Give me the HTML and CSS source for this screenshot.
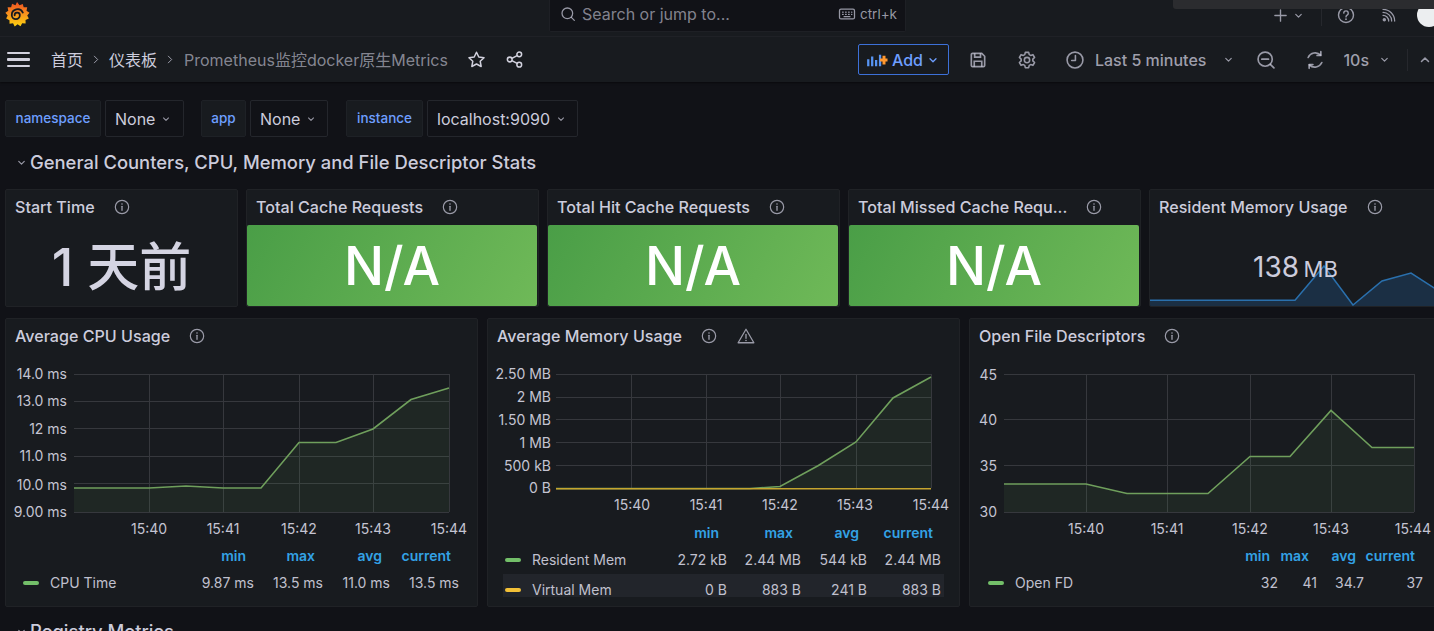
FILE: index.html
```html
<!DOCTYPE html>
<html lang="zh">
<head>
<meta charset="utf-8">
<title>Prometheus监控docker原生Metrics</title>
<link rel="stylesheet" href="styles.css">
</head>
<body>
<svg class="sprite" aria-hidden="true">
  <symbol id="i-info" viewBox="0 0 24 24"><circle cx="12" cy="12" r="10" fill="none" stroke="currentColor" stroke-width="1.8"/><path d="M12 11v6" stroke="currentColor" stroke-width="2" stroke-linecap="round"/><circle cx="12" cy="7.6" r="1.2" fill="currentColor"/></symbol>
  <symbol id="i-warn" viewBox="0 0 24 24"><path d="M12 3 22.5 21h-21Z" fill="none" stroke="currentColor" stroke-width="1.7" stroke-linejoin="round"/><path d="M12 10v5" stroke="currentColor" stroke-width="1.8" stroke-linecap="round"/><circle cx="12" cy="18" r="1.1" fill="currentColor"/></symbol>
  <symbol id="i-down" viewBox="0 0 24 24"><path d="M6 9.500l6 6 6-6" fill="none" stroke="currentColor" stroke-width="2.600" stroke-linecap="round" stroke-linejoin="round"/></symbol>
  <symbol id="i-right" viewBox="0 0 24 24"><path d="M8 4l8 8-8 8" fill="none" stroke="currentColor" stroke-width="2.400" stroke-linecap="round" stroke-linejoin="round"/></symbol>
  <symbol id="i-search" viewBox="0 0 24 24"><circle cx="11" cy="11" r="8" fill="none" stroke="currentColor" stroke-width="1.900"/><path d="M17 17l4.500 4.500" stroke="currentColor" stroke-width="1.900" stroke-linecap="round"/></symbol>
  <symbol id="i-star" viewBox="0 0 24 24"><path d="M12 2.800l2.900 6 6.600.9-4.800 4.600 1.200 6.500L12 17.700l-5.900 3.100 1.200-6.500-4.800-4.600 6.600-.9Z" fill="none" stroke="currentColor" stroke-width="1.900" stroke-linejoin="round"/></symbol>
  <symbol id="i-share" viewBox="0 0 24 24"><circle cx="18" cy="5.500" r="3" fill="none" stroke="currentColor" stroke-width="1.900"/><circle cx="6" cy="12" r="3" fill="none" stroke="currentColor" stroke-width="1.900"/><circle cx="18" cy="18.500" r="3" fill="none" stroke="currentColor" stroke-width="1.900"/><path d="M8.700 10.600l6.600-3.600M8.700 13.400l6.600 3.600" stroke="currentColor" stroke-width="1.900"/></symbol>
  <symbol id="i-save" viewBox="0 0 24 24"><path d="M4 5.500A1.500 1.500 0 0 1 5.500 4h11l3.500 3.500v11a1.500 1.500 0 0 1-1.500 1.500h-13A1.500 1.500 0 0 1 4 18.500Z" fill="none" stroke="currentColor" stroke-width="2" stroke-linejoin="round"/><path d="M8 4v4.500h7V4M7.500 20v-6.500h9V20" fill="none" stroke="currentColor" stroke-width="2"/></symbol>
  <symbol id="i-cog" viewBox="0 0 24 24"><circle cx="12" cy="12" r="3.200" fill="none" stroke="currentColor" stroke-width="1.900"/><path d="M10 2.800h4l.7 2.800 1.700.9 2.700-.9 2 3.400-2.100 2v2l2.100 2-2 3.400-2.700-.9-1.700.9-.7 2.800h-4l-.7-2.800-1.700-.9-2.700.9-2-3.400 2.100-2v-2l-2.100-2 2-3.400 2.700.9 1.700-.9Z" fill="none" stroke="currentColor" stroke-width="1.900" stroke-linejoin="round"/></symbol>
  <symbol id="i-clock" viewBox="0 0 24 24"><circle cx="12" cy="12" r="9.500" fill="none" stroke="currentColor" stroke-width="1.900"/><path d="M12.500 6.500V12.500H8" fill="none" stroke="currentColor" stroke-width="1.900" stroke-linecap="round" stroke-linejoin="round"/></symbol>
  <symbol id="i-zoom" viewBox="0 0 24 24"><circle cx="11" cy="11" r="8.500" fill="none" stroke="currentColor" stroke-width="2"/><path d="M17.200 17.200l4.300 4.300M7 11h8" stroke="currentColor" stroke-width="2" stroke-linecap="round"/></symbol>
  <symbol id="i-sync" viewBox="0 0 24 24"><path d="M18.800 6.200A9.200 9.200 0 0 0 3.800 9M5.200 17.800A9.200 9.200 0 0 0 20.200 15" fill="none" stroke="currentColor" stroke-width="2" stroke-linecap="round"/><path d="M19 2v4.500h-4.500M5 22v-4.500h4.500" fill="none" stroke="currentColor" stroke-width="2" stroke-linecap="round" stroke-linejoin="round"/></symbol>
  <symbol id="i-help" viewBox="0 0 24 24"><circle cx="12" cy="12" r="10" fill="none" stroke="currentColor" stroke-width="1.900"/><path d="M9 9.500a3 3 0 1 1 4.500 2.600c-1 .6-1.500 1.200-1.500 2.400" fill="none" stroke="currentColor" stroke-width="1.900" stroke-linecap="round"/><circle cx="12" cy="17.600" r="1.200" fill="currentColor"/></symbol>
  <symbol id="i-rss" viewBox="0 0 24 24"><circle cx="5" cy="19" r="2.600" fill="currentColor"/><path d="M3 12.500a8.500 8.500 0 0 1 8.500 8.500M3 8a13 13 0 0 1 13 13M3 3.500A17.500 17.500 0 0 1 20.500 21" fill="none" stroke="currentColor" stroke-width="1.900" stroke-linecap="round"/></symbol>
  <symbol id="i-plus" viewBox="0 0 24 24"><path d="M12 3v18M3 12h18" stroke="currentColor" stroke-width="2.200" stroke-linecap="round"/></symbol>
  <symbol id="i-kbd" viewBox="0 0 24 24"><rect x="2" y="5.500" width="20" height="13" rx="2" fill="none" stroke="currentColor" stroke-width="1.700"/><path d="M6 9.500h1M10 9.500h1M14 9.500h1M18 9.500h.5M6 12.500h1M10 12.500h1M14 12.500h1M18 12.500h.5M8 15.500h8" stroke="currentColor" stroke-width="1.500" stroke-linecap="round"/></symbol>
</svg>

<header class="topbar">
  <div class="brand">
    <svg class="logo" viewBox="0 0 28 30" aria-label="Grafana">
      <defs>
        <linearGradient id="logo-grad" x1="0.5" y1="1" x2="0.5" y2="0">
          <stop offset="0" stop-color="#fcd20f"/>
          <stop offset="0.5" stop-color="#f7941d"/>
          <stop offset="1" stop-color="#ef4f23"/>
        </linearGradient>
      </defs>
      <path fill="url(#logo-grad)" d="M13.500 1l2.700 3.600 3.700-1.500 1 3.900 4-.1-.8 4 3.300 2.100-2.500 3.100 1.800 3.500-3.700 1.500.1 4-3.900-.4-1.800 3.500-3.300-2.300-3.200 2.500-1.900-3.500-3.900.5-.1-4L1.300 19.600l1.700-3.600-2.600-3 3.300-2.200-.8-4 4 .2 1-4 3.800 1.500Z"/>
      <path d="M10.800 16A2.900 2.900 0 0 1 16.600 15.500A4.500 4.500 0 0 1 7.600 15.800A6.500 6.500 0 0 1 20 12.800" fill="none" stroke="#181b1f" stroke-width="2" stroke-linecap="round"/>
    </svg>
  </div>
  <div class="search">
    <svg class="ic ic-16"><use href="#i-search"/></svg>
    <span class="search-text">Search or jump to...</span>
    <svg class="ic ic-18 kbd"><use href="#i-kbd"/></svg>
    <span class="search-key">ctrl+k</span>
  </div>
  <div class="top-actions">
    <svg class="ic ic-15"><use href="#i-plus"/></svg>
    <svg class="ic ic-11 act-chev"><use href="#i-down"/></svg>
    <span class="top-divider"></span>
    <svg class="ic ic-18 act-help"><use href="#i-help"/></svg>
    <svg class="ic ic-16 act-rss"><use href="#i-rss"/></svg>
    <span class="avatar"></span>
  </div>
  <div class="top-strip"></div>
</header>

<nav class="navbar">
  <div class="hamburger"><span></span><span></span><span></span></div>
  <span class="crumb crumb-first">首页</span>
  <svg class="ic ic-11 crumb-sep"><use href="#i-right"/></svg>
  <span class="crumb">仪表板</span>
  <svg class="ic ic-11 crumb-sep"><use href="#i-right"/></svg>
  <span class="crumb crumb-current">Prometheus监控docker原生Metrics</span>
  <svg class="ic ic-19 nav-star"><use href="#i-star"/></svg>
  <svg class="ic ic-19 nav-share"><use href="#i-share"/></svg>
  <div class="nav-right">
    <button class="add-btn">
      <svg class="add-icon" viewBox="0 0 24 16"><path d="M2 7v8M6.500 4v11M11 8v7M15.500 2v13" stroke="#5794f2" stroke-width="2.600"/><path d="M20 3v10M15.500 8h8.500" stroke="#ff9830" stroke-width="3.400"/></svg>
      <span>Add</span>
      <svg class="ic ic-12"><use href="#i-down"/></svg>
    </button>
    <svg class="ic ic-20 nav-save"><use href="#i-save"/></svg>
    <svg class="ic ic-20 nav-cog"><use href="#i-cog"/></svg>
    <svg class="ic ic-20 nav-clock"><use href="#i-clock"/></svg>
    <span class="nav-label nav-range">Last 5 minutes</span>
    <svg class="ic ic-11 nav-range-chev"><use href="#i-down"/></svg>
    <svg class="ic ic-20 nav-zoom"><use href="#i-zoom"/></svg>
    <svg class="ic ic-20 nav-sync"><use href="#i-sync"/></svg>
    <span class="nav-label nav-ten">10s</span>
    <svg class="ic ic-11 nav-ten-chev"><use href="#i-down"/></svg>
    <span class="nav-divider"></span>
    <svg class="ic ic-14 nav-up"><use href="#i-down"/></svg>
  </div>
</nav>

<main class="main">
  <section class="vars">
    <span class="var-label var-ns">namespace</span>
    <span class="var-select var-none1">None <svg class="ic ic-10"><use href="#i-down"/></svg></span>
    <span class="var-label var-app">app</span>
    <span class="var-select var-none2">None <svg class="ic ic-10"><use href="#i-down"/></svg></span>
    <span class="var-label var-inst">instance</span>
    <span class="var-select var-host">localhost:9090 <svg class="ic ic-10"><use href="#i-down"/></svg></span>
  </section>

  <h2 class="row-title"><svg class="ic ic-11"><use href="#i-down"/></svg>General Counters, CPU, Memory and File Descriptor Stats</h2>

  <section class="stats">
    <article class="panel">
      <div class="panel-title"><span>Start Time</span><svg class="ic ic-16"><use href="#i-info"/></svg></div>
      <div class="stat-big">1 天前</div>
    </article>
    <article class="panel">
      <div class="panel-title"><span>Total Cache Requests</span><svg class="ic ic-16"><use href="#i-info"/></svg></div>
      <div class="stat-na">N/A</div>
    </article>
    <article class="panel">
      <div class="panel-title"><span>Total Hit Cache Requests</span><svg class="ic ic-16"><use href="#i-info"/></svg></div>
      <div class="stat-na">N/A</div>
    </article>
    <article class="panel">
      <div class="panel-title"><span>Total Missed Cache Requ...</span><svg class="ic ic-16"><use href="#i-info"/></svg></div>
      <div class="stat-na">N/A</div>
    </article>
    <article class="panel panel-spark">
      <div class="panel-title"><span>Resident Memory Usage</span><svg class="ic ic-16"><use href="#i-info"/></svg></div>
      <svg class="spark" viewBox="1150 225 292 82" preserveAspectRatio="none">
        <path d="M1150 301.300H1295L1324 267 1353 306 1382 282 1411 274 1442 294V307H1150Z" class="spark-fill"/>
        <path d="M1150 301.300H1295L1324 267 1353 306 1382 282 1411 274 1442 294" class="spark-line"/>
      </svg>
      <div class="spark-value"><span class="spark-num">138</span> <span class="spark-unit">MB</span></div>
    </article>
  </section>

  <section class="charts">
    <article class="panel">
      <div class="panel-title"><span>Average CPU Usage</span><svg class="ic ic-16"><use href="#i-info"/></svg></div>
      <svg class="chart chart-cpu" viewBox="6 356 471 186">
        <path class="grid" d="M74 374.500H449M74 401.500H449M74 428.500H449M74 456.500H449M74 483.500H449M74 512.500H449M149.500 374V512M223.500 374V512M299.500 374V512M373.500 374V512M449.500 374V512"/>
        <path class="area" d="M74 488H149L186 486 223 488H261L299 442.500H336L373 429 411 399.500 449 388V512H74Z"/>
        <path class="line" d="M74 488H149L186 486 223 488H261L299 442.500H336L373 429 411 399.500 449 388"/>
        <g class="ylab"><text x="67" y="379">14.0 ms</text><text x="67" y="406">13.0 ms</text><text x="67" y="434">12 ms</text><text x="67" y="461">11.0 ms</text><text x="67" y="490">10.0 ms</text><text x="67" y="517">9.00 ms</text></g>
        <g class="xlab"><text x="149" y="534">15:40</text><text x="223" y="534">15:41</text><text x="299" y="534">15:42</text><text x="373" y="534">15:43</text><text x="449" y="534">15:44</text></g>
      </svg>
      <div class="legend legend-cpu">
        <div class="lg-row lg-head"><span></span><span>min</span><span>max</span><span>avg</span><span>current</span></div>
        <div class="lg-row"><span class="lg-name"><i class="sw sw-green"></i>CPU Time</span><span>9.87 ms</span><span>13.5 ms</span><span>11.0 ms</span><span>13.5 ms</span></div>
      </div>
    </article>

    <article class="panel">
      <div class="panel-title"><span>Average Memory Usage</span><svg class="ic ic-16"><use href="#i-info"/></svg><svg class="ic ic-18 warn"><use href="#i-warn"/></svg></div>
      <svg class="chart chart-mem" viewBox="488 356 471 163">
        <path class="grid" d="M556 374.500H931M556 397.500H931M556 419.500H931M556 442.500H931M556 465.500H931M631.500 374V488M706.500 374V488M780.500 374V488M856.500 374V488M931.500 374V488"/>
        <path class="area" d="M556 488.500H750L780 486.500 818 465.700 856 442 893 398 931 377V488.500Z"/>
        <path class="line" d="M556 488.500H750L780 486.500 818 465.700 856 442 893 398 931 377"/>
        <path class="line-y" d="M556 488.700H931"/>
        <g class="ylab"><text x="551" y="379">2.50 MB</text><text x="551" y="402">2 MB</text><text x="551" y="425">1.50 MB</text><text x="551" y="448">1 MB</text><text x="551" y="471">500 kB</text><text x="551" y="493">0 B</text></g>
        <g class="xlab"><text x="632" y="510">15:40</text><text x="706" y="510">15:41</text><text x="780" y="510">15:42</text><text x="855" y="510">15:43</text><text x="931" y="510">15:44</text></g>
      </svg>
      <div class="legend legend-mem">
        <div class="lg-row lg-head"><span></span><span>min</span><span>max</span><span>avg</span><span>current</span></div>
        <div class="lg-row lg-r2"><span class="lg-name"><i class="sw sw-green"></i>Resident Mem</span><span>2.72 kB</span><span>2.44 MB</span><span>544 kB</span><span>2.44 MB</span></div>
        <div class="lg-row lg-hover"><span class="lg-name"><i class="sw sw-yellow"></i>Virtual Mem</span><span>0 B</span><span>883 B</span><span>241 B</span><span>883 B</span></div>
      </div>
    </article>

    <article class="panel">
      <div class="panel-title"><span>Open File Descriptors</span><svg class="ic ic-16"><use href="#i-info"/></svg></div>
      <svg class="chart chart-fd" viewBox="970 356 478 186">
        <path class="grid" d="M1004 374.500H1414M1004 419.500H1414M1004 465.500H1414M1004 512.500H1414M1086.500 374V512M1167.500 374V512M1250.500 374V512M1331.500 374V512M1414.500 374V512"/>
        <path class="area" d="M1004 484H1086L1127 493.500H1208L1250 456.500H1290L1331 410.500 1372 447.500H1414V512H1004Z"/>
        <path class="line" d="M1004 484H1086L1127 493.500H1208L1250 456.500H1290L1331 410.500 1372 447.500H1414"/>
        <g class="ylab"><text x="997" y="380">45</text><text x="997" y="425">40</text><text x="997" y="471">35</text><text x="997" y="517">30</text></g>
        <g class="xlab"><text x="1086" y="534">15:40</text><text x="1167" y="534">15:41</text><text x="1250" y="534">15:42</text><text x="1331" y="534">15:43</text><text x="1413" y="534">15:44</text></g>
      </svg>
      <div class="legend legend-fd">
        <div class="lg-row lg-head"><span></span><span>min</span><span>max</span><span>avg</span><span>current</span></div>
        <div class="lg-row"><span class="lg-name"><i class="sw sw-green"></i>Open FD</span><span>32</span><span>41</span><span>34.7</span><span>37</span></div>
      </div>
    </article>
  </section>

  <h2 class="row-title row-title-next"><svg class="ic ic-11"><use href="#i-down"/></svg>Registry Metrics</h2>
</main>
</body>
</html>
```
FILE: styles.css
```css
* { box-sizing: border-box; }
html, body { margin: 0; height: 631px; overflow: hidden; }
body {
  width: 1434px;
  background: #111217;
  color: #ccccdc;
  font-family: Inter, "Noto Sans CJK SC", sans-serif;
}
.sprite { display: none; }
.ic { display: block; flex: none; color: rgba(204, 204, 220, 0.72); }
.ic-10 { width: 10px; height: 10px; }
.ic-11 { width: 11px; height: 11px; }
.ic-12 { width: 12px; height: 12px; }
.ic-14 { width: 14px; height: 14px; }
.ic-15 { width: 15px; height: 15px; }
.ic-16 { width: 16px; height: 16px; }
.ic-18 { width: 18px; height: 18px; }
.ic-19 { width: 19px; height: 19px; }
.ic-20 { width: 20px; height: 20px; }

/* top bar */
.topbar {
  position: relative;
  display: grid;
  grid-template-columns: 549px 357px 1fr;
  height: 37px;
  background: #181b1f;
  border-bottom: 1px solid #1f2126;
}
.brand { padding: 1px 0 0 5px; }
.logo { display: block; width: 25px; height: 27px; }
.search {
  display: flex;
  align-items: center;
  height: 32px;
  padding: 0 8px 3px 10px;
  background: #111217;
  border: 1px solid #1e2025;
  border-top: 0;
  border-radius: 0 0 2px 2px;
}
.search-text { margin-left: 6px; font-size: 16px; color: rgba(204, 204, 220, 0.62); }
.kbd { margin-left: auto; }
.search-key { margin-left: 4px; font-size: 13.500px; color: rgba(204, 204, 220, 0.72); }
.top-actions { display: flex; align-items: center; padding: 0 0 6px 367px; height: 36px; }
.act-chev { margin-left: 5px; }
.top-divider { width: 1px; height: 22px; margin-left: 17px; background: #26282d; }
.act-help { margin-left: 15px; }
.act-rss { margin-left: 26px; }
.avatar { width: 24px; height: 24px; margin-left: 20px; border-radius: 50%; background: #eceef0; flex: none; }
.top-strip {
  position: absolute;
  top: 0;
  left: 1173px;
  right: 0;
  height: 9px;
  background: #2b2c2f;
  border-radius: 0 0 0 3px;
}

/* nav bar */
.navbar {
  display: flex;
  align-items: center;
  height: 45px;
  padding-left: 7px;
  background: #181b1f;
  box-shadow: 0 1px 2px rgba(0, 0, 0, 0.5);
}
.hamburger { display: flex; flex-direction: column; gap: 4px; width: 23px; }
.hamburger span { height: 2.500px; background: #d2d2de; border-radius: 1px; }
.crumb { padding-bottom: 2px; font-size: 16px; color: #ccccdc; white-space: nowrap; }
.crumb-first { margin-left: 21px; }
.crumb-sep { margin: 0 8px 0 8px; width: 10px; }
.crumb-current { margin-left: 1px; color: rgba(204, 204, 220, 0.62); }
.nav-star { margin-left: 19px; color: #d2d2de; }
.nav-share { margin-left: 19px; color: #d2d2de; }
.nav-right { display: flex; align-items: center; margin-left: auto; }
.add-btn {
  display: flex;
  align-items: center;
  width: 91px;
  height: 31px;
  padding: 0 0 0 7px;
  background: #181b1f;
  border: 1px solid #3d71d9;
  border-radius: 2px;
  color: #6e9fff;
  font: 500 16px Inter, sans-serif;
}
.add-btn .ic { color: #6e9fff; margin-left: 4px; }
.add-icon { width: 22px; height: 14px; margin-right: 4px; }
.nav-save { margin-left: 19px; }
.nav-cog { margin-left: 29px; }
.nav-clock { margin-left: 28px; }
.nav-label { font-size: 16px; font-weight: 500; color: rgba(204, 204, 220, 0.75); white-space: nowrap; }
.nav-range { margin-left: 10px; }
.nav-range-chev { margin-left: 17px; }
.nav-zoom { margin-left: 22px; }
.nav-sync { margin-left: 29px; }
.nav-ten { margin-left: 18px; }
.nav-ten-chev { margin-left: 10px; }
.nav-divider { width: 1px; height: 22px; margin-left: 17px; background: #26282d; }
.nav-up { margin-left: 10px; margin-right: 2px; transform: rotate(180deg); }

/* variables */
.main { padding: 18px 0 0 5px; }
.vars { display: flex; height: 37px; }
.var-label {
  display: flex;
  align-items: center;
  justify-content: center;
  padding-bottom: 1px;
  background: #181b1f;
  border: 1px solid #1e2126;
  border-radius: 2px;
  color: #6e9fff;
  font-size: 13.500px;
  font-weight: 500;
}
.var-select {
  display: flex;
  align-items: center;
  gap: 6px;
  padding-left: 9px;
  margin-left: 4px;
  background: #111217;
  border: 1px solid #24262c;
  border-radius: 2px;
  font-size: 16px;
  color: #ccccdc;
}
.var-ns { width: 96px; }
.var-none1 { width: 79px; }
.var-app { width: 45px; margin-left: 17px; }
.var-none2 { width: 78px; }
.var-inst { width: 77px; margin-left: 18px; }
.var-host { width: 151px; margin-left: 4px; }

.row-title {
  display: flex;
  align-items: center;
  gap: 3px;
  height: 52px;
  margin: 0;
  padding: 0 0 2px 11px;
  font-size: 18.400px;
  font-weight: 500;
  color: #ccccdc;
  white-space: nowrap;
}
.row-title-next { margin-top: -1px; }

/* panels */
.panel {
  position: relative;
  display: flex;
  flex-direction: column;
  background: #181b1f;
  border: 1px solid #202226;
  border-radius: 2px;
  overflow: hidden;
}
.panel-title {
  display: flex;
  align-items: center;
  gap: 19px;
  flex: none;
  height: 34px;
  margin-bottom: 1px;
  padding-left: 9px;
  font-size: 16.100px;
  font-weight: 500;
  color: #ccccdc;
  white-space: nowrap;
}
.stats { display: grid; grid-template-columns: 233px 293px 293px 293px 293px; gap: 8px; height: 118px; }
.stat-big {
  flex: 1;
  display: flex;
  align-items: center;
  justify-content: center;
  padding-bottom: 4px;
  font-size: 52px;
  font-weight: 500;
  color: #d4d4e2;
}
.stat-na {
  flex: 1;
  display: flex;
  align-items: center;
  justify-content: center;
  margin: 0 1px 0 0;
  background: linear-gradient(120deg, #4a9e47, #6fb958);
  border-radius: 2px;
  font-size: 53px;
  font-weight: 500;
  color: #fff;
}
.spark { position: absolute; left: 0; bottom: 0; width: 292px; height: 82px; }
.spark-fill { fill: #1b2f44; }
.spark-line { fill: none; stroke: #2a70ad; stroke-width: 1.500; }
.spark-value {
  position: absolute;
  top: 60px;
  left: 103px;
  color: #ccccdc;
  white-space: nowrap;
}
.spark-num { font-size: 28px; }
.spark-unit { font-size: 22px; }

/* chart panels */
.charts { display: grid; grid-template-columns: 473px 473px 480px; gap: 9px; height: 289px; margin-top: 11px; }
.charts .panel-title { margin-bottom: 3px; }
.warn { margin-left: 1px; }
.chart { display: block; flex: none; }
.chart-cpu { width: 471px; height: 186px; }
.chart-mem { width: 471px; height: 163px; }
.chart-fd { width: 478px; height: 186px; }
.grid { fill: none; stroke: #36383d; stroke-width: 1; }
.area { fill: rgba(115, 191, 105, 0.08); }
.line { fill: none; stroke: #6f9f5c; stroke-width: 1.600; }
.line-y { fill: none; stroke: #c5a52f; stroke-width: 1.600; }
.ylab text, .xlab text { font-size: 14px; fill: #c4c4d2; }
.ylab text { text-anchor: end; }
.xlab text { text-anchor: middle; }

.lg-row { display: grid; align-items: center; height: 27px; font-size: 14px; color: #c0c0ce; }
.lg-row span { text-align: right; white-space: nowrap; }
.lg-row .lg-name { display: flex; align-items: center; text-align: left; }
.lg-head { font-weight: 600; color: #33a2e5; }
.lg-head span { padding-right: 8px; }
.legend-cpu { margin: 0 18px 0 17px; }
.legend-cpu .lg-row { grid-template-columns: 1fr 60px 69px 67px 69px; }
.legend-mem { margin: 0 15px; }
.legend-mem .lg-row { grid-template-columns: 1fr 60px 74px 66px 74px; padding: 0 3px 0 2px; }
.legend-mem .lg-r2 { margin-bottom: 1px; }
.legend-mem .lg-hover { height: 23px; padding-top: 7px; background: #22252b; overflow: visible; }
.legend-fd { margin: 0 25px 0 18px; }
.legend-fd .lg-row { grid-template-columns: 1fr 60px 39px 47px 59px; }
.sw { flex: none; width: 16px; height: 4px; margin-right: 11px; border-radius: 2px; }
.sw-green { background: #73bf69; }
.sw-yellow { background: #f2c037; }
```
